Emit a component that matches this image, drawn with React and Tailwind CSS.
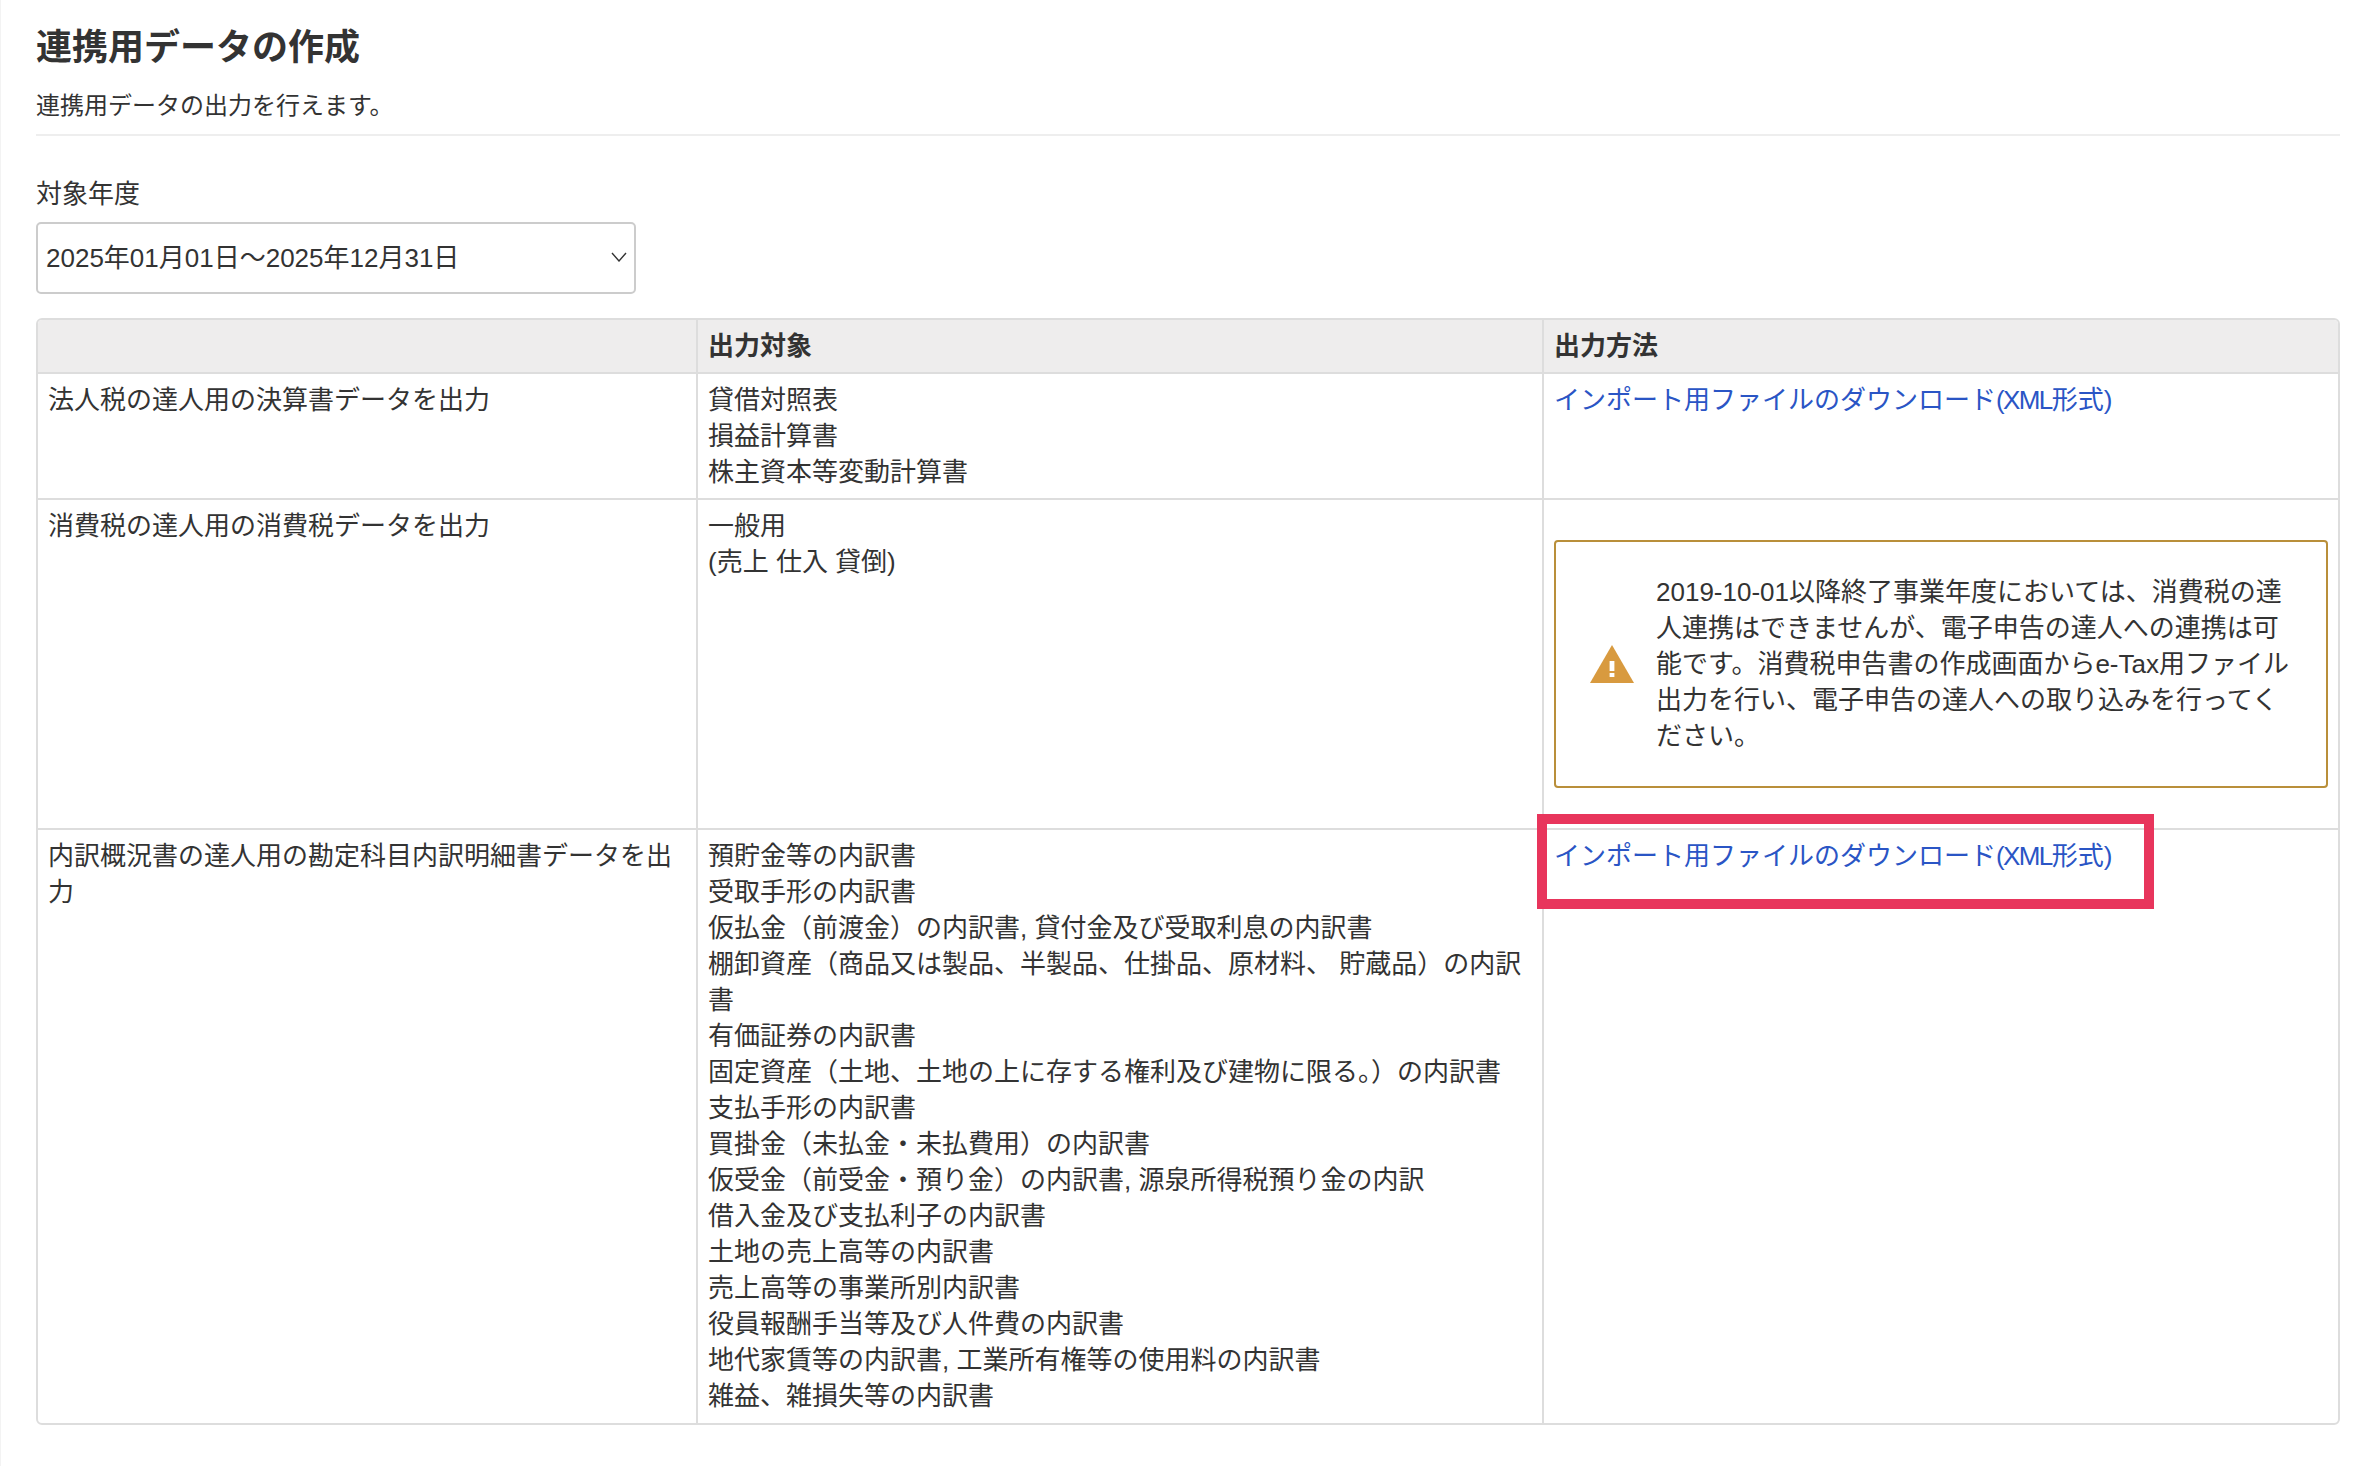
const rows3 = [
  "預貯金等の内訳書",
  "受取手形の内訳書",
  "仮払金（前渡金）の内訳書, 貸付金及び受取利息の内訳書",
  "棚卸資産（商品又は製品、半製品、仕掛品、原材料、 貯蔵品）の内訳書",
  "有価証券の内訳書",
  "固定資産（土地、土地の上に存する権利及び建物に限る。）の内訳書",
  "支払手形の内訳書",
  "買掛金（未払金・未払費用）の内訳書",
  "仮受金（前受金・預り金）の内訳書, 源泉所得税預り金の内訳",
  "借入金及び支払利子の内訳書",
  "土地の売上高等の内訳書",
  "売上高等の事業所別内訳書",
  "役員報酬手当等及び人件費の内訳書",
  "地代家賃等の内訳書, 工業所有権等の使用料の内訳書",
  "雑益、雑損失等の内訳書",
];

const DownloadLink = () => (
  <a href="#" className="text-[#2a55c5]">
    インポート用ファイルのダウンロード<span className="tracking-[-1.6px]">(XML</span>形式)
  </a>
);

const WarningIcon = () => (
  <svg viewBox="0 0 44 38" className="w-[44px] h-[38px] shrink-0">
    <path d="M22 0 L44 38 L0 38 Z" fill="#d89a3f" />
    <rect x="19.6" y="16" width="4.8" height="10" fill="#fff" />
    <rect x="19.6" y="28" width="4.8" height="4" fill="#fff" />
  </svg>
);

export default function App() {
  return (
    <div
      className="min-h-[1466px] bg-white border-l border-[#f3f3f3] pl-[35px] pr-[40px] pt-[26px] text-[26px] leading-[36px] text-[#333333]"
      style={{ fontFamily: '"Liberation Sans", "Noto Sans CJK JP", sans-serif' }}
    >
      <h1 className="text-[36px] leading-[44px] font-bold">連携用データの作成</h1>
      <p className="mt-[18px] text-[24px] leading-[36px]">連携用データの出力を行えます。</p>
      <hr className="mt-[10px] border-t-2 border-[#eeeeee]" />

      <div className="mt-[40px]">対象年度</div>
      <div className="relative mt-[10px] w-[600px]">
        <select className="w-full h-[72px] appearance-none bg-white border-2 border-[#cccccc] rounded-[5px] pl-[8px] text-[26px] text-[#333333] outline-none">
          <option>2025年01月01日～2025年12月31日</option>
        </select>
        <svg
          viewBox="0 0 16 10"
          className="absolute right-[9px] top-[30px] w-[16px] h-[10px] pointer-events-none"
        >
          <path d="M1 1 L8 9 L15 1" fill="none" stroke="#333333" strokeWidth="1.4" />
        </svg>
      </div>

      <div className="mt-[24px] border-2 border-[#dddddd] rounded-[6px] overflow-hidden">
        <table className="w-full table-fixed border-collapse">
          <colgroup>
            <col className="w-[659px]" />
            <col className="w-[846px]" />
            <col />
          </colgroup>
          <thead>
            <tr className="bg-[#eeeded] h-[53px]">
              <th className="px-[10px] text-left font-bold" />
              <th className="px-[10px] border-l-2 border-[#dddddd] text-left font-bold">出力対象</th>
              <th className="px-[10px] border-l-2 border-[#dddddd] text-left font-bold">出力方法</th>
            </tr>
          </thead>
          <tbody>
            <tr className="border-t-2 border-[#dddddd] align-top">
              <td className="px-[10px] pt-[8px] pb-[8px]">法人税の達人用の決算書データを出力</td>
              <td className="px-[10px] pt-[8px] pb-[8px] border-l-2 border-[#dddddd]">
                <div>貸借対照表</div>
                <div>損益計算書</div>
                <div>株主資本等変動計算書</div>
              </td>
              <td className="px-[10px] pt-[8px] pb-[8px] border-l-2 border-[#dddddd]">
                <DownloadLink />
              </td>
            </tr>
            <tr className="border-t-2 border-[#dddddd] align-top">
              <td className="px-[10px] pt-[8px] pb-[10px]">消費税の達人用の消費税データを出力</td>
              <td className="px-[10px] pt-[8px] pb-[10px] border-l-2 border-[#dddddd]">
                <div>一般用</div>
                <div>(売上 仕入 貸倒)</div>
              </td>
              <td className="px-[10px] pt-[40px] pb-[40px] border-l-2 border-[#dddddd]">
                <div className="flex items-center gap-[22px] border-2 border-[#b98f3a] rounded-[4px] pl-[34px] pr-[28px] py-[32px]">
                  <WarningIcon />
                  <p>
                    2019-10-01以降終了事業年度においては、消費税の達人連携はできませんが、電子申告の達人への連携は可能です。消費税申告書の作成画面からe-Tax用ファイル出力を行い、電子申告の達人への取り込みを行ってください。
                  </p>
                </div>
              </td>
            </tr>
            <tr className="border-t-2 border-[#dddddd] align-top">
              <td className="px-[10px] pt-[8px] pb-[9px]">内訳概況書の達人用の勘定科目内訳明細書データを出力</td>
              <td className="px-[10px] pt-[8px] pb-[9px] border-l-2 border-[#dddddd]">
                {rows3.map((row) => (
                  <div key={row}>{row}</div>
                ))}
              </td>
              <td className="relative px-[10px] pt-[8px] pb-[9px] border-l-2 border-[#dddddd]">
                <DownloadLink />
                {/* annotation box drawn over the link */}
                <div className="absolute left-[-7px] top-[-16px] w-[617px] h-[95px] border-[10px] border-[#e8355c] pointer-events-none" />
              </td>
            </tr>
          </tbody>
        </table>
      </div>
    </div>
  );
}
